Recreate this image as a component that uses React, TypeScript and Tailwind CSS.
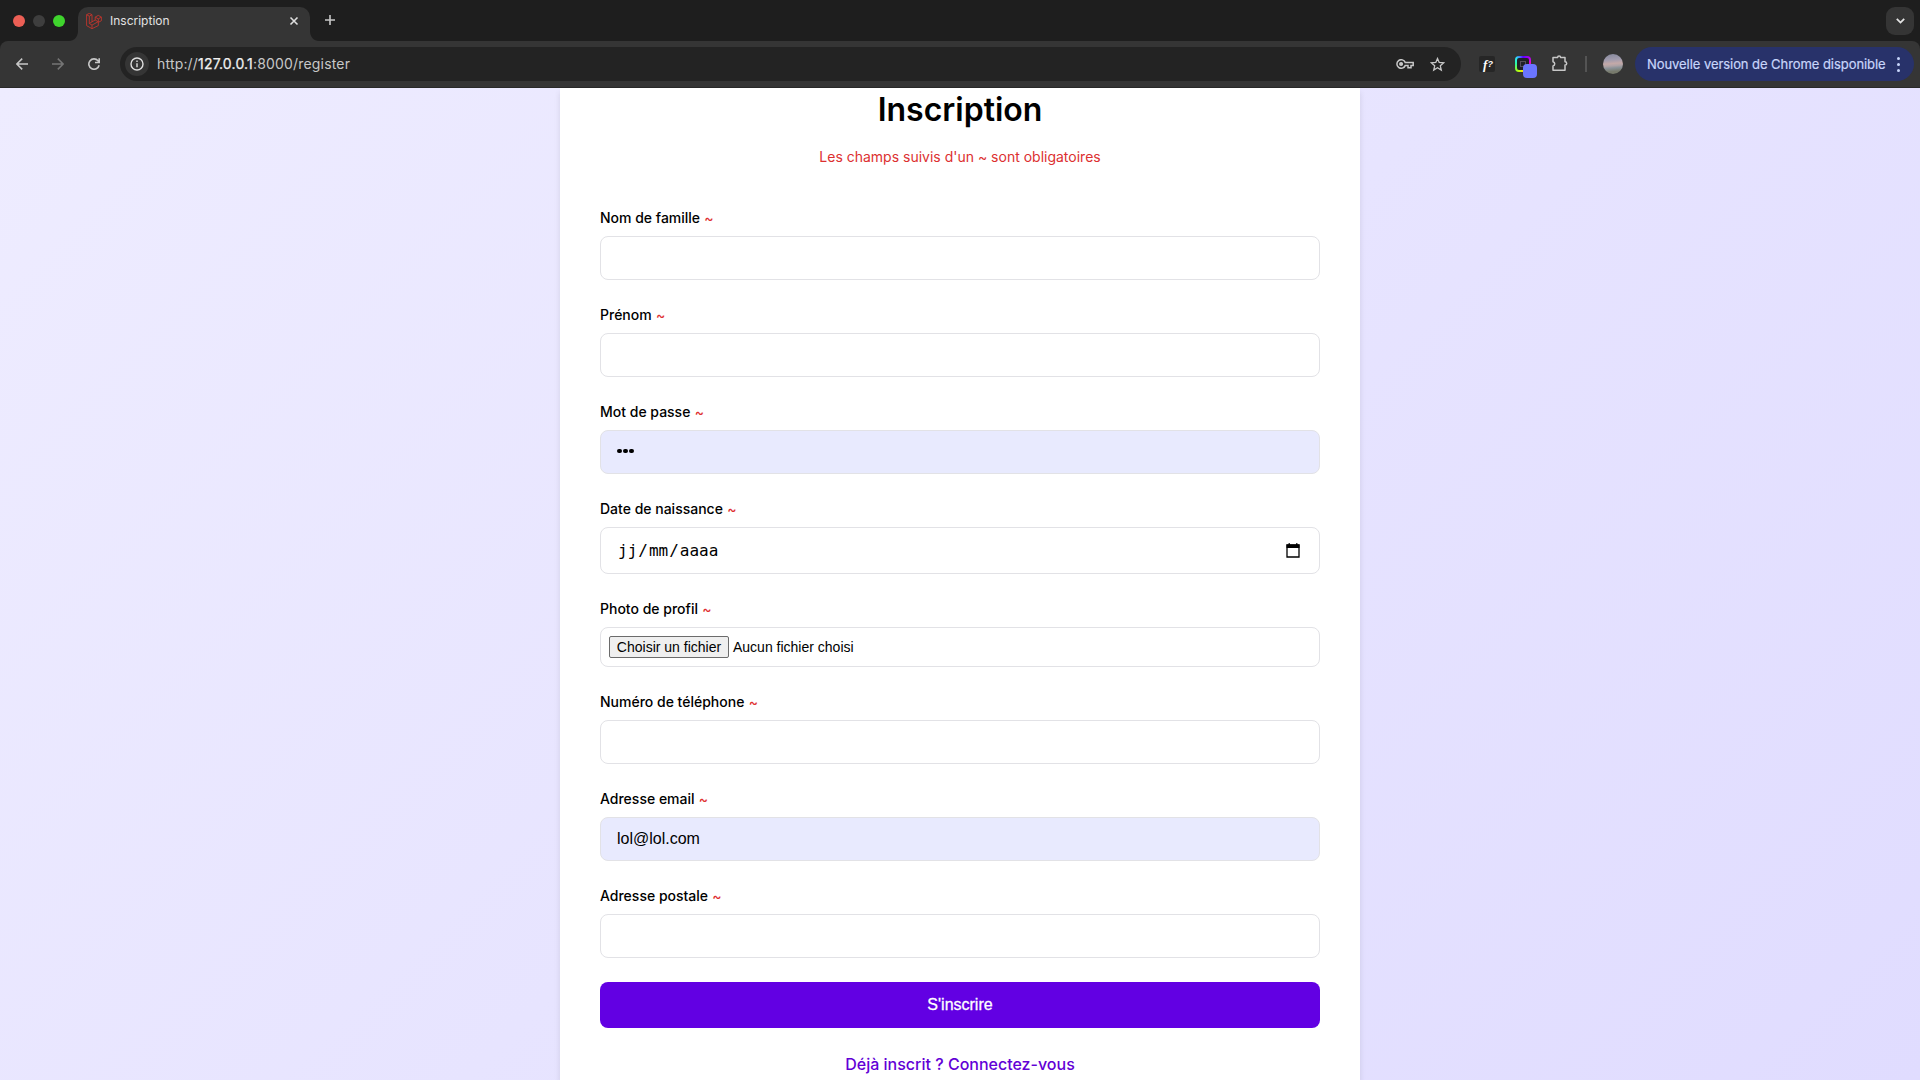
import React from "react";
import type { ReactNode } from "react";

const inter = "font-['Inter',sans-serif]";
const arial = "font-['Liberation_Sans',sans-serif]";

function LaravelLogo() {
  return (
    <svg width="16" height="16" viewBox="0 0 16 16" fill="none" stroke="#c0362c" strokeWidth="0.9" strokeLinejoin="round">
      <path d="M0.6 1.7 3.3 0.4 6 1.7v7.1l3.200-1.800V4.100l3.100-1.700 3.100 1.700v3.600l-3.100 1.700v3.200l-6.300 3.100-5.400-3.100z" />
      <path d="M0.6 1.7 3.3 3.2 6 1.7M3.3 3.2v7.3L6 8.8M3.3 10.5l2.700 1.600 6.300-3.500M6 12.100v3.600M9.200 4.100l3.100 1.800 3.100-1.800M12.300 5.900v3.500M9.200 7l3.100 1.800" />
    </svg>
  );
}

function TabStrip() {
  return (
    <div className="flex h-[41px] items-end bg-[#1e1e1e]">
      <div className="flex h-[41px] w-[65px] items-center gap-2 pl-[13px]">
        <span className="size-3 rounded-full bg-[#ec5f55]" />
        <span className="size-3 rounded-full bg-[#3e3e3e]" />
        <span className="size-3 rounded-full bg-[#3fd42d]" />
      </div>
      <svg className="ml-1" width="9" height="10" viewBox="0 0 9 10">
        <path d="M9 0v10H0c5 0 9-4 9-10z" fill="#353535" />
      </svg>
      <div className="flex h-[34px] w-[232px] items-center rounded-t-[10px] bg-[#353535] pb-[7px] pl-2 pr-[11px]">
        <LaravelLogo />
        <span className="ml-2 flex-1 text-[12px] leading-4 text-[#e3e3e3]">Inscription</span>
        <svg width="10" height="10" viewBox="0 0 10 10" stroke="#dedede" strokeWidth="1.6">
          <path d="M1.5 1.5l7 7M8.5 1.5l-7 7" />
        </svg>
      </div>
      <svg width="9" height="10" viewBox="0 0 9 10">
        <path d="M0 0v10h9C4 10 0 6 0 0z" fill="#353535" />
      </svg>
      <svg className="mb-4 ml-[6px]" width="10" height="10" viewBox="0 0 10 10" stroke="#c7c7c7" strokeWidth="1.6">
        <path d="M5 0v10M0 5h10" />
      </svg>
      <div className="mb-[6px] ml-auto mr-[6px] flex size-7 items-center justify-center rounded-[9px] bg-[#353535]">
        <svg width="9" height="6" viewBox="0 0 9 6" fill="none" stroke="#e3e3e3" strokeWidth="1.8">
          <path d="M.8 .9l3.700 3.700L8.200 .9" />
        </svg>
      </div>
    </div>
  );
}

function Toolbar() {
  return (
    <div className="h-[47px] bg-[#1e1e1e]">
      <div className="flex h-[47px] items-center rounded-t-[8px] border-b border-[#292929] bg-[#353535] pl-4 pr-[6px]">
        <svg width="12" height="12" viewBox="0 0 12 12" fill="none" stroke="#c7c7c7" strokeWidth="1.5">
          <path d="M12 6H1M6.2.6.9 6l5.3 5.4" />
        </svg>
        <svg className="ml-6" width="12" height="12" viewBox="0 0 12 12" fill="none" stroke="#757575" strokeWidth="1.5">
          <path d="M0 6h11M5.8.6 11.1 6l-5.3 5.4" />
        </svg>
        <svg className="ml-6" width="12" height="12" viewBox="0 0 12 12" fill="none" stroke="#c7c7c7" strokeWidth="1.6">
          <path d="M11.1 7.2A5.2 5.2 0 1 1 10 2.7L11.2 4M11.2.2v4.3H7" />
        </svg>
        <div className="ml-5 flex h-[34px] w-[1341px] items-center rounded-full bg-[#232323] pl-[5px] pr-4">
          <span className="flex size-6 items-center justify-center rounded-full bg-[#353535]">
            <svg width="14" height="14" viewBox="0 0 14 14" fill="none" stroke="#dedede" strokeWidth="1.4">
              <circle cx="7" cy="7" r="6" />
              <path d="M7 6.2v4M7 3.6v1.5" />
            </svg>
          </span>
          <span className="ml-2 flex-1 text-[14px] leading-5 tracking-[0.18px] text-[#c7c7c7]">
            http://<span className="text-[#f0f0f0] [-webkit-text-stroke:0.25px_#f0f0f0]">127.0.0.1</span>:8000/register
          </span>
          <svg width="18" height="10" viewBox="0 0 18 10" fill="none" stroke="#c7c7c7" strokeWidth="1.5">
            <path d="M9.200 3.400a4.300 4.300 0 1 0 0 3.200H12v2.200h3V6.600h2.200V3.400z" />
            <circle cx="5.1" cy="5" r="1.3" fill="#c7c7c7" />
          </svg>
          <svg className="ml-4" width="15" height="15" viewBox="0 0 15 15" fill="none" stroke="#c7c7c7" strokeWidth="1.3">
            <path d="M7.5 1.500l1.700 4 4.400.4-3.300 2.900 1 4.300-3.800-2.300-3.800 2.300 1-4.300L1.400 5.900l4.400-.4z" />
          </svg>
        </div>
        <span className="ml-[18px] flex size-4 items-center justify-center rounded-[2px] bg-[#262626] font-['Liberation_Serif',serif] text-[13px] font-bold italic leading-none text-white">
          <span className="pl-[2px]">f</span>
          <span className="font-['Liberation_Sans',sans-serif] text-[9px]">?</span>
        </span>
        <div className="relative ml-5 size-4">
          <div className="size-4 rounded-[4px] bg-[conic-gradient(from_0deg,#5a00ff,#e000e8_20%,#ff2a5a_35%,#ffe600_50%,#9dff1c_62%,#2dfaa0_75%,#2be3f5_87%,#5a00ff)] p-[2px]">
            <div className="flex size-3 items-center justify-center rounded-[2px] bg-[#202028]">
              <span className="size-[6px] border border-[#55505c]" />
            </div>
          </div>
          <span className="absolute left-2 top-2 size-[14px] rounded-[4px] bg-[#6a75ff]" />
        </div>
        <svg className="-mt-[2px] ml-5" width="18" height="18" viewBox="0 0 18 18" fill="none" stroke="#c7c7c7" strokeWidth="1.5" strokeLinejoin="round">
          <path d="M2 3.500h4.600a1.500 1.500 0 0 1 3 0H14v4.200a1.700 1.700 0 0 1 0 3.400v5.100H2v-4.300c2.300-.4 2.300-3.700 0-4.100z" />
        </svg>
        <span className="ml-4 h-4 w-[2px] bg-[#545454]" />
        <span className="ml-4 size-5 rounded-full bg-[linear-gradient(175deg,#85889c_0%,#a19cae_30%,#c4a9a8_48%,#b0a3a6_58%,#8c9399_68%,#777a6c_85%)]" />
        <div className="ml-auto flex h-[34px] w-[279px] items-center rounded-full bg-[#28326a] pl-3 pr-[14px]">
          <span className="flex-1 whitespace-nowrap text-[13px] leading-5 tracking-[-0.06px] text-[#c8d6fb] [-webkit-text-stroke:0.2px_#c8d6fb]">
            Nouvelle version de Chrome disponible
          </span>
          <span className="flex flex-col gap-[3px]">
            <span className="size-[3px] rounded-full bg-[#c8d6fb]" />
            <span className="size-[3px] rounded-full bg-[#c8d6fb]" />
            <span className="size-[3px] rounded-full bg-[#c8d6fb]" />
          </span>
        </div>
      </div>
    </div>
  );
}

function Field({ label, className, children }: { label: string; className: string; children?: ReactNode }) {
  return (
    <div className="mb-6">
      <label className="mb-2 block text-[14px] font-medium leading-[21px] text-black">
        {label} <span className="ml-[0.5px] text-[#e03131]">~</span>
      </label>
      <div className={`flex items-center rounded-[8px] border border-[#e2e2e6] ${className}`}>{children}</div>
    </div>
  );
}

export default function App() {
  return (
    <div className={`flex h-[1080px] w-[1920px] flex-col overflow-hidden ${inter}`}>
      <TabStrip />
      <Toolbar />
      <main className="flex min-h-0 flex-1 justify-center bg-[linear-gradient(135deg,#eeecff_0%,#e0dcff_100%)]">
        <div className="w-[800px] bg-white px-10 shadow-[0_4px_6px_rgba(0,0,0,0.1)]">
          <h1 className="mt-[-2px] text-center text-[32px] font-semibold leading-[48px] text-black">Inscription</h1>
          <p className="mb-[39px] mt-3 text-center text-[14px] leading-[22px] text-[#dc3030]">
            Les champs suivis d'un ~ sont obligatoires
          </p>
          <Field label="Nom de famille" className="h-11" />
          <Field label="Prénom" className="h-11" />
          <Field label="Mot de passe" className="h-11 bg-[#e8eafe] pl-4">
            <span className="flex gap-[1.5px] pb-[2px]">
              <span className="size-[4.5px] rounded-full bg-black" />
              <span className="size-[4.5px] rounded-full bg-black" />
              <span className="size-[4.5px] rounded-full bg-black" />
            </span>
          </Field>
          <Field label="Date de naissance" className="h-[47px] justify-between pl-[17px] pr-[19px]">
            <span className="font-['DejaVu_Sans_Mono',monospace] text-[16px] leading-5 text-black">
              <span className="mr-px">jj</span>/<span className="mx-px">mm</span>/<span className="ml-px">aaaa</span>
            </span>
            <svg width="14" height="15" viewBox="0 0 14 15">
              <path d="M1 2h12v12H1z" fill="none" stroke="#000" strokeWidth="1.3" />
              <path d="M.5 1.500h13V5H.5zM2.500.3h1.500v2H2.500zM10 .3h1.500v2H10z" fill="#000" />
            </svg>
          </Field>
          <Field label="Photo de profil" className={`h-10 pl-2 text-[14px] text-black ${arial}`}>
            <span className="flex h-[22px] w-[120px] items-center justify-center rounded-[2px] border border-[#6b6b6b] bg-[#efefef]">
              Choisir un fichier
            </span>
            <span className="ml-1">Aucun fichier choisi</span>
          </Field>
          <Field label="Numéro de téléphone" className="h-11" />
          <Field label="Adresse email" className={`h-11 bg-[#e8eafe] pl-4 text-[16px] text-black ${arial}`}>
            <span className="pb-px">lol@lol.com</span>
          </Field>
          <Field label="Adresse postale" className="h-11" />
          <button className={`block h-[46px] w-full rounded-[8px] bg-[#6200e3] pb-px text-[16px] text-white [-webkit-text-stroke:0.3px_white] ${arial}`}>
            S'inscrire
          </button>
          <p className="mt-6 text-center text-[16px] font-medium leading-6 text-[#6200d6]">Déjà inscrit ? Connectez-vous</p>
        </div>
      </main>
    </div>
  );
}
